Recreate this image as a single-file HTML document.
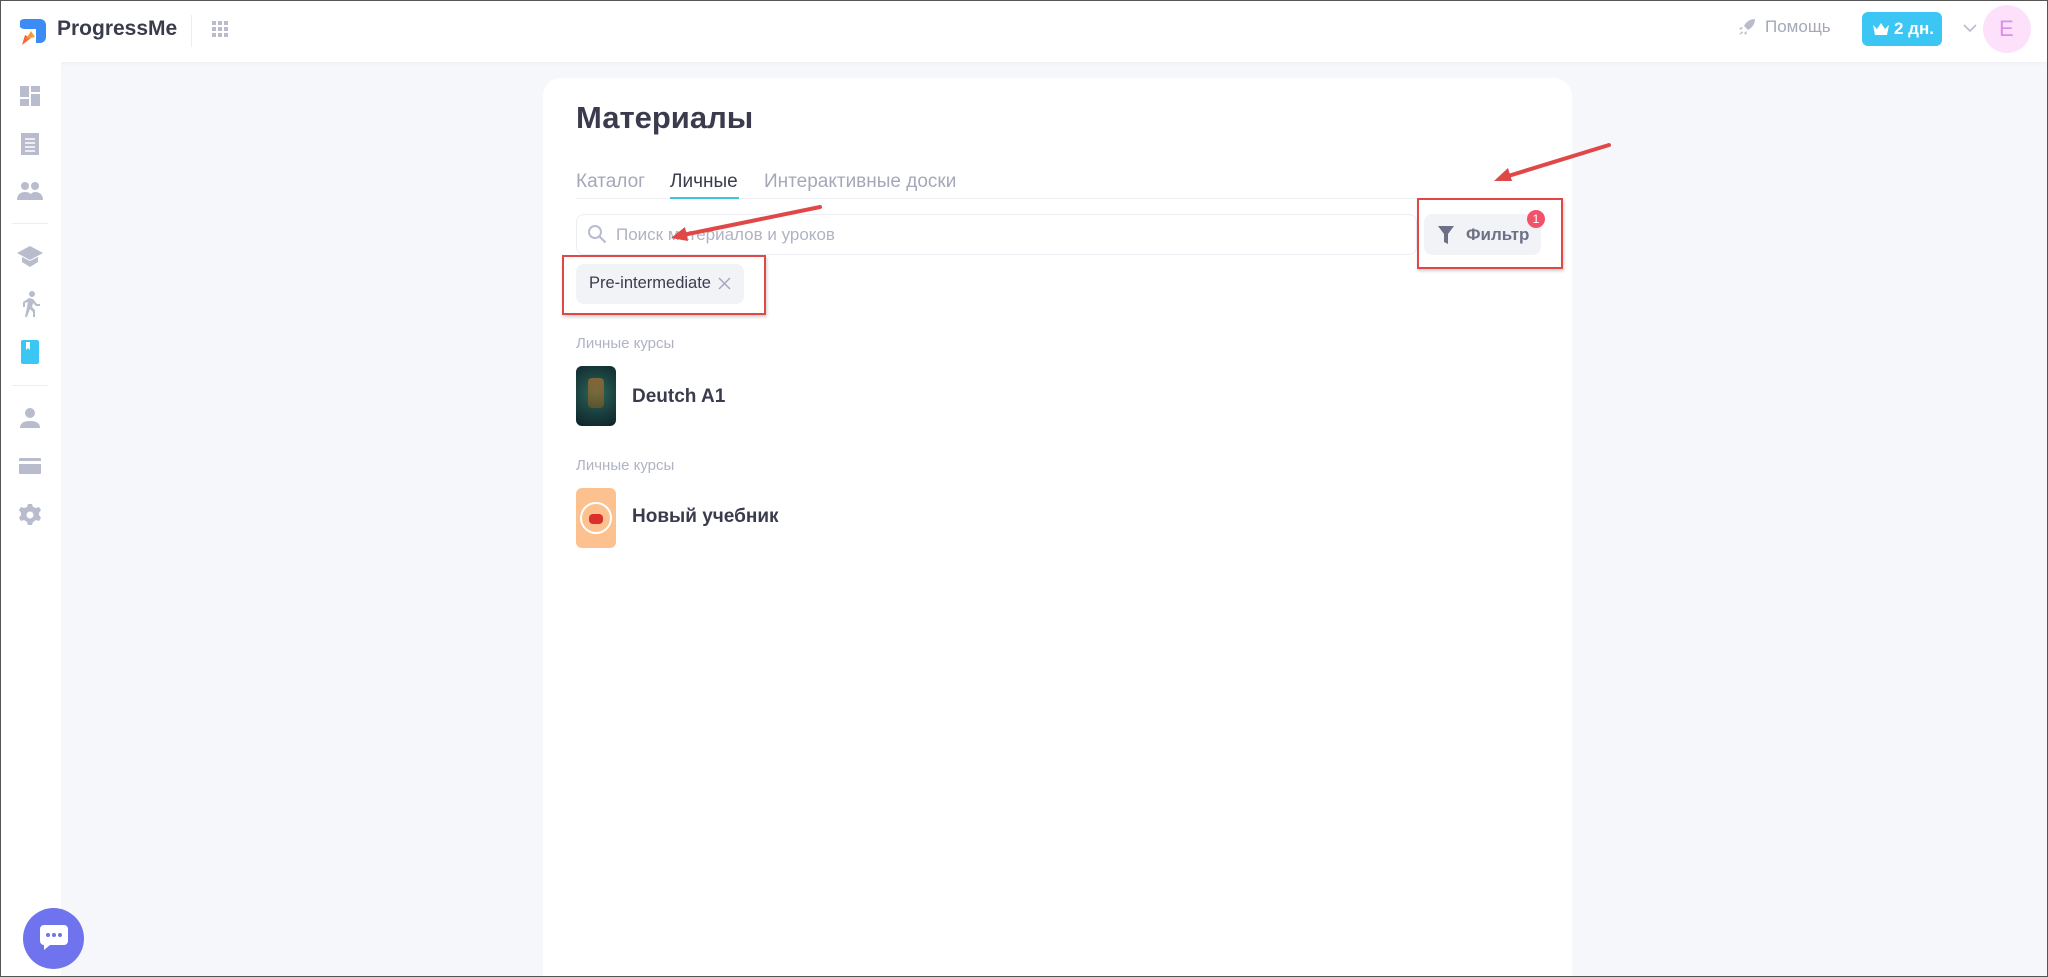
<!DOCTYPE html>
<html style="overflow:hidden;width:2048px;height:977px"><head><meta charset="utf-8"><style>
*{box-sizing:border-box;margin:0;padding:0}
body{width:2048px;height:977px;overflow:hidden;background:#f6f7fb;font-family:"Liberation Sans","DejaVu Sans",sans-serif;position:relative}
.abs{position:absolute}
.hdr{left:0;top:0;width:2048px;height:62px;background:#fff;box-shadow:0 1px 4px rgba(0,0,0,.04)}
.side{left:0;top:62px;width:61px;height:915px;background:#fff}
.card{left:543px;top:78px;width:1029px;height:899px;background:#fff;border-radius:18px 18px 0 0}
.t{white-space:nowrap}
</style></head><body>
<div class="abs hdr"></div>
<div class="abs side"></div>
<svg class="abs" style="left:20px;top:17px" width="28" height="30" viewBox="0 0 28 30"><path d="M4 2h16a6 6 0 0 1 6 6v12a6 6 0 0 1-6 6h-4V12H4a5 5 0 0 1 0-10z" fill="#3d8bf5"/><path d="M2 28l3-10 6 3z" fill="#f5663a"/><path d="M6 22l5-8 4 6z" fill="#f59a3a"/></svg>
<div class="abs t" style="left:57px;top:17px;font-size:21px;font-weight:bold;color:#3a3c4e">ProgressMe</div>
<div class="abs" style="left:191px;top:15px;width:1px;height:32px;background:#eceef3"></div>
<svg class="abs" style="left:212px;top:21px" width="16" height="16" viewBox="0 0 16 16" fill="#b8bccc"><rect x="0" y="0" width="4" height="4"/><rect x="6" y="0" width="4" height="4"/><rect x="12" y="0" width="4" height="4"/><rect x="0" y="6" width="4" height="4"/><rect x="6" y="6" width="4" height="4"/><rect x="12" y="6" width="4" height="4"/><rect x="0" y="12" width="4" height="4"/><rect x="6" y="12" width="4" height="4"/><rect x="12" y="12" width="4" height="4"/></svg>
<svg class="abs" style="left:1738px;top:18px" width="18" height="18" viewBox="0 0 18 18"><path d="M17 1c-5 0-9 3-11 7l4 4c4-2 7-6 7-11zM5 9l-4 1 2 2zM9 13l-1 4-2-2zM4 13l-3 4 4-2z" fill="#b8bccc"/></svg>
<div class="abs t" style="left:1765px;top:17px;font-size:17px;color:#a5a8b8">Помощь</div>
<div class="abs" style="left:1862px;top:12px;width:80px;height:34px;background:#3cc6f4;border-radius:6px"></div>
<svg class="abs" style="left:1872px;top:22px" width="18" height="14" viewBox="0 0 18 14"><path d="M1 3l4 4 4-6 4 6 4-4-2 10H3z" fill="#fff"/></svg>
<div class="abs t" style="left:1894px;top:19px;font-size:17px;font-weight:bold;color:#fff">2 дн.</div>
<svg class="abs" style="left:1963px;top:23px" width="14" height="10" viewBox="0 0 14 10"><path d="M1 2l6 6 6-6" stroke="#b8bccc" stroke-width="1.6" fill="none"/></svg>
<div class="abs" style="left:1983px;top:5px;width:48px;height:48px;border-radius:50%;background:#fde1fb"></div>
<div class="abs t" style="left:1999px;top:16px;font-size:22px;color:#dc8fe6">E</div>
<svg class="abs" style="left:20px;top:86px" width="20" height="20" viewBox="0 0 20 20"><path fill="#b8bccc" d="M0 0h9v11H0zM11 0h9v6h-9zM11 8h9v12h-9zM0 13h9v7H0z"/></svg>
<svg class="abs" style="left:21px;top:133px" width="18" height="22" viewBox="0 0 18 22"><path fill="#b8bccc" d="M0 0h18v22H0z"/><path stroke="#fff" stroke-width="1.6" d="M4 6h10M4 10h10M4 14h10M4 18h10"/></svg>
<svg class="abs" style="left:17px;top:182px" width="26" height="18" viewBox="0 0 26 18"><circle cx="8" cy="4" r="4" fill="#b8bccc"/><circle cx="18" cy="4" r="4" fill="#b8bccc"/><path d="M0 18c0-6 4-8 8-8s8 2 8 8zM12 18c1-6 3-8 6-8 4 0 8 2 8 8z" fill="#b8bccc"/></svg>
<div class="abs" style="left:12px;top:223px;width:36px;height:1px;background:#eceef3"></div>
<svg class="abs" style="left:17px;top:246px" width="26" height="22" viewBox="0 0 26 22"><path d="M13 0L0 7l13 7 13-7zM5 11v5l8 5 8-5v-5l-8 4z" fill="#b8bccc"/></svg>
<svg class="abs" style="left:20px;top:291px" width="20" height="26" viewBox="0 0 20 26"><circle cx="12" cy="3" r="3" fill="#b8bccc"/><path d="M9 7l-6 4v5h2v-4l3-1-3 15h2l3-8 3 3v5h2v-7l-3-3 1-4 3 3h4v-2h-3l-4-5z" fill="#b8bccc"/></svg>
<svg class="abs" style="left:21px;top:340px" width="18" height="24" viewBox="0 0 18 24"><rect width="18" height="24" rx="2" fill="#3cc6f4"/><path d="M5 2h4v8l-2-2-2 2z" fill="#fff"/></svg>
<div class="abs" style="left:12px;top:385px;width:36px;height:1px;background:#eceef3"></div>
<svg class="abs" style="left:20px;top:408px" width="20" height="20" viewBox="0 0 20 20"><circle cx="10" cy="5" r="5" fill="#b8bccc"/><path d="M0 20c0-5 4-7 10-7s10 2 10 7z" fill="#b8bccc"/></svg>
<svg class="abs" style="left:19px;top:458px" width="22" height="16" viewBox="0 0 22 16"><rect width="22" height="16" rx="1" fill="#b8bccc"/><rect y="3" width="22" height="3" fill="#fff"/></svg>
<svg class="abs" style="left:19px;top:504px" width="22" height="22" viewBox="0 0 22 22"><path d="M9 0h4l1 3 3 1 3-1 2 3-2 3v2l2 3-2 3-3-1-3 2-1 3H9l-1-3-3-2-3 1-2-3 2-3v-2L0 6l2-3 3 1 3-1z" fill="#b8bccc"/><circle cx="11" cy="11" r="3.5" fill="#fff"/></svg>
<div class="abs" style="left:23px;top:908px;width:61px;height:61px;border-radius:50%;background:#6f73ee"></div>
<svg class="abs" style="left:40px;top:925px" width="28" height="26" viewBox="0 0 28 26"><path d="M4 0h20a4 4 0 0 1 4 4v12a4 4 0 0 1-4 4H10l-6 5v-5a4 4 0 0 1-4-4V4a4 4 0 0 1 4-4z" fill="#fff"/><circle cx="8" cy="10" r="2" fill="#6f73ee"/><circle cx="14" cy="10" r="2" fill="#6f73ee"/><circle cx="20" cy="10" r="2" fill="#6f73ee"/></svg>
<div class="abs card"></div>
<div class="abs t" style="left:576px;top:100px;font-size:31px;font-weight:bold;color:#3a3c4e">Материалы</div>
<div class="abs t" style="left:576px;top:171px;font-size:19px;color:#a5a8b8">Каталог</div>
<div class="abs t" style="left:670px;top:171px;font-size:19px;color:#3a3c4e">Личные</div>
<div class="abs t" style="left:764px;top:171px;font-size:19px;color:#a5a8b8">Интерактивные доски</div>
<div class="abs" style="left:576px;top:198px;width:965px;height:1px;background:#eef0f4"></div>
<div class="abs" style="left:670px;top:197px;width:69px;height:2px;background:#3cc6d8"></div>
<div class="abs" style="left:576px;top:214px;width:841px;height:41px;border:1px solid #eceef3;border-radius:8px"></div>
<svg class="abs" style="left:587px;top:224px" width="20" height="20" viewBox="0 0 20 20"><circle cx="8" cy="8" r="6" stroke="#b8bccc" stroke-width="2" fill="none"/><path d="M12.5 12.5l6 6" stroke="#b8bccc" stroke-width="2.2"/></svg>
<div class="abs t" style="left:616px;top:225px;font-size:17px;color:#b0b3c2">Поиск материалов и уроков</div>
<div class="abs" style="left:1424px;top:214px;width:117px;height:41px;background:#f2f3f7;border-radius:8px"></div>
<svg class="abs" style="left:1438px;top:226px" width="16" height="18" viewBox="0 0 16 18"><path d="M0 0h16l-6 8v10l-4-2V8z" fill="#6d7086"/></svg>
<div class="abs t" style="left:1466px;top:225px;font-size:17px;font-weight:bold;color:#6d7086">Фильтр</div>
<div class="abs" style="left:1527px;top:210px;width:18px;height:18px;border-radius:50%;background:#f2536a;color:#fff;font-size:12px;text-align:center;line-height:18px">1</div>
<div class="abs" style="left:1417px;top:198px;width:146px;height:71px;border:2px solid #e04848;box-shadow:1px 2px 3px rgba(0,0,0,.2)"></div>
<div class="abs" style="left:576px;top:264px;width:168px;height:40px;background:#f2f3f7;border-radius:8px"></div>
<div class="abs t" style="left:589px;top:274px;font-size:16.5px;color:#3a3c4e">Pre-intermediate</div>
<svg class="abs" style="left:718px;top:277px" width="13" height="13" viewBox="0 0 13 13"><path d="M1 1l11 11M12 1L1 12" stroke="#a5a8b8" stroke-width="1.5"/></svg>
<div class="abs" style="left:562px;top:255px;width:204px;height:60px;border:2px solid #e04848;box-shadow:1px 2px 3px rgba(0,0,0,.2)"></div>
<div class="abs t" style="left:576px;top:335px;font-size:15px;color:#b0b3c2">Личные курсы</div>
<div class="abs" style="left:576px;top:366px;width:40px;height:60px;border-radius:6px;background:radial-gradient(circle at 50% 45%,#2d6a5a 0,#1a3e3e 55%,#0d2228 100%)"></div>
<div class="abs" style="left:588px;top:378px;width:16px;height:30px;background:linear-gradient(#d27a2a,#8a5a1a);opacity:.55;border-radius:4px"></div>
<div class="abs t" style="left:632px;top:386px;font-size:19px;font-weight:bold;color:#3a3c4e">Deutch A1</div>
<div class="abs t" style="left:576px;top:457px;font-size:15px;color:#b0b3c2">Личные курсы</div>
<div class="abs" style="left:576px;top:488px;width:40px;height:60px;border-radius:6px;background:#fcc18e"></div>
<div class="abs" style="left:580px;top:502px;width:32px;height:32px;border-radius:50%;border:2px solid #fff"></div>
<div class="abs" style="left:589px;top:514px;width:14px;height:10px;border-radius:4px;background:#d9302c"></div>
<div class="abs t" style="left:632px;top:506px;font-size:19px;font-weight:bold;color:#3a3c4e">Новый учебник</div>
<svg class="abs" style="left:0;top:0" width="2048" height="977" viewBox="0 0 2048 977">
<g stroke="#e04848" stroke-width="4" stroke-linecap="round">
<line x1="1609" y1="145" x2="1505" y2="177"/>
<line x1="820" y1="207" x2="683" y2="235"/>
</g>
<path d="M1494 181l14-13 4 13z" fill="#e04848"/>
<path d="M671 238l14-11 3 14z" fill="#e04848"/>
</svg>
<div class="abs" style="left:0;top:0;width:2048px;height:977px;border:1px solid #555"></div>
</body></html>
